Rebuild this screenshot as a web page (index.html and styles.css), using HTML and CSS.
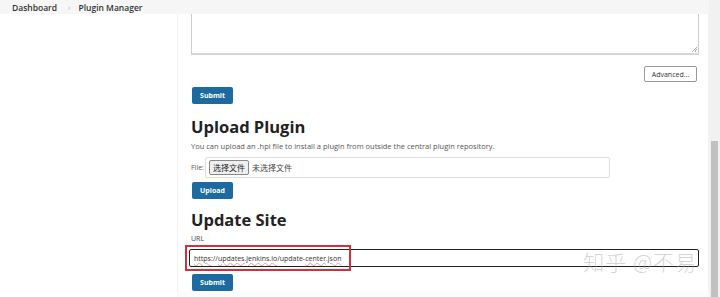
FILE: index.html
```html
<!DOCTYPE html>
<html lang="en">

<head>
    <meta charset="UTF-8">
    <title>Plugin Manager</title>
    <link rel="stylesheet" href="styles.css">
</head>

<body>
    <div class="page">
        <div class="main">
            <div class="crumbs">
                <span class="crumb">Dashboard</span>
                <span class="sep">›</span>
                <span class="crumb">Plugin Manager</span>
            </div>
            <div class="layout">
                <div class="side"></div>
                <div class="panel">
                    <div class="textarea"><span class="grip"></span></div>
                    <div class="adv-row">
                        <button class="btn-plain">Advanced...</button>
                    </div>
                    <button class="btn">Submit</button>

                    <h2>Upload Plugin</h2>
                    <p class="help">You can upload an .hpi file to install a plugin from outside the central plugin repository.</p>
                    <div class="file-row">
                        <span class="label">File:</span>
                        <div class="file-box">
                            <span class="choose">选择文件</span>
                            <span class="none">未选择文件</span>
                        </div>
                    </div>
                    <button class="btn">Upload</button>

                    <h2 class="second">Update Site</h2>
                    <div class="url-label">URL</div>
                    <div class="url-wrap">
                        <div class="url-input"><span class="squiggle">https</span>://<span class="squiggle">updates.jenkins.io</span>/update-<span class="squiggle">center.json</span></div>
                        <div class="mark"></div>
                        <div class="watermark">知乎 @不易</div>
                    </div>
                    <button class="btn">Submit</button>
                </div>
            </div>
        </div>
        <div class="scrollbar">
            <div class="arrow"></div>
            <div class="track"></div>
            <div class="thumb"></div>
        </div>
    </div>
</body>

</html>
```

FILE: styles.css
```css
/* Global */
body {
    margin: 0;
    font-family: "Open Sans", "Noto Sans CJK SC", sans-serif;
    color: #333;
    background-color: #fff;
}

.page {
    display: flex;
    height: 297px;
    overflow: hidden;
}

.main {
    flex: 1;
    display: flex;
    flex-direction: column;
}

/* Breadcrumb bar */
.crumbs {
    height: 14px;
    background-color: #f6f6f6;
    display: flex;
    align-items: center;
    padding-left: 12px;
    font-size: 8.5px;
    font-weight: 600;
    color: #333;
}

.crumbs .sep {
    color: #bbb;
    font-size: 7px;
    margin: 0 8px 0 11px;
}

.layout {
    flex: 1;
    display: flex;
    background-color: #fbfbfb;
}

.side {
    width: 177px;
    background-color: #fff;
}

.panel {
    width: 508px;
    padding: 0 9px 0 13px;
    background-color: #fff;
    border-left: 1px solid #f1f1f1;
    border-right: 1px solid #f1f1f1;
    height: 278px;
}

/* Textarea stub */
.textarea {
    position: relative;
    height: 39px;
    border: 1px solid #ccc;
    border-top: none;
    border-bottom: 2px solid #d6d6d6;
    background-color: #fff;
}

.grip {
    position: absolute;
    right: 1px;
    bottom: 1px;
    width: 5px;
    height: 5px;
    background: linear-gradient(135deg, transparent 45%, #aaa 45%, #aaa 55%, transparent 55%, transparent 70%, #aaa 70%, #aaa 80%, transparent 80%);
}

.adv-row {
    display: flex;
    justify-content: flex-end;
    margin-top: 11px;
    padding-right: 2px;
}

.btn-plain {
    width: 53px;
    height: 16px;
    padding: 0;
    font-family: inherit;
    font-size: 7px;
    color: #333;
    background-color: #fff;
    border: 1px solid #999;
    border-radius: 2px;
}

.btn {
    display: block;
    width: 41px;
    height: 17px;
    margin-left: 1px;
    padding: 0;
    font-family: inherit;
    font-size: 7px;
    font-weight: 700;
    color: #fff;
    background-color: #1d6aa1;
    border: none;
    border-radius: 2px;
}

.adv-row + .btn {
    margin-top: 5px;
}

h2 {
    margin: 12px 0 0 0;
    font-size: 16.5px;
    font-weight: 700;
    line-height: 22px;
    color: #222;
}

h2.second {
    margin-top: 10px;
}

.help {
    margin: 3px 0 0 0;
    font-size: 7.5px;
    color: #555;
}

.file-row {
    display: flex;
    align-items: center;
    margin-top: 6px;
    font-size: 7px;
    color: #555;
}

.file-row .label {
    width: 14px;
}

.file-box {
    width: 400px;
    height: 19px;
    border: 1px solid #ddd;
    border-radius: 2px;
    display: flex;
    align-items: center;
    padding-left: 3px;
}

.choose {
    padding: 1px 3px;
    border: 1px solid #888;
    border-radius: 2px;
    background-color: #efefef;
    color: #222;
    font-size: 8px;
}

.none {
    margin-left: 3px;
    font-size: 8px;
    color: #444;
}

.file-row + .btn {
    margin-top: 4px;
}

.url-label {
    margin-top: 3px;
    font-size: 7px;
    color: #444;
}

/* URL field with highlight */
.url-wrap {
    position: relative;
    margin: 6px 0 7px -2px;
}

.url-input {
    height: 16px;
    border: 1px solid #222;
    border-radius: 2px;
    display: flex;
    align-items: center;
    padding-left: 4px;
    font-size: 7px;
    color: #333;
    white-space: pre;
}

.squiggle {
    text-decoration: underline wavy rgba(224, 96, 96, 0.6);
    text-decoration-thickness: 0.5px;
    text-underline-offset: 1px;
}

.mark {
    position: absolute;
    left: -4px;
    top: -4px;
    width: 162px;
    height: 22px;
    border: 2px solid #d32f3c;
}

.watermark {
    position: absolute;
    right: 2px;
    top: -3px;
    font-size: 21px;
    color: rgba(170, 170, 170, 0.5);
    font-family: "Noto Sans CJK SC", sans-serif;
    font-weight: 300;
    letter-spacing: 1px;
}

/* Scrollbar */
.scrollbar {
    width: 12px;
    display: flex;
    flex-direction: column;
    background-color: #f1f1f1;
}

.arrow {
    height: 8px;
}

.track {
    height: 133px;
}

.thumb {
    flex: 1;
    margin: 0 2px;
    background-color: #c1c1c1;
}
```
